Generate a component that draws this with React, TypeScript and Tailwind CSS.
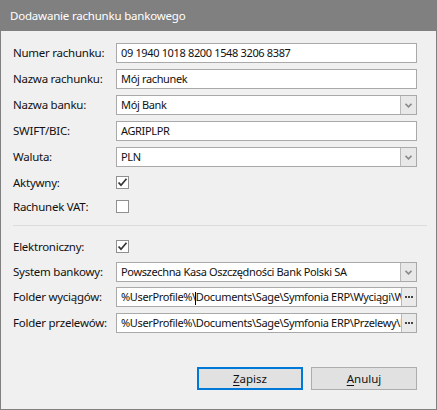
import { ReactNode } from 'react';

const font = { fontFamily: '"Noto Sans", "Open Sans", sans-serif' };

function Row({ label, children, className = '' }: { label: string; children: ReactNode; className?: string }) {
  return (
    <div className={`flex items-center ${className}`}>
      <div className="w-[103px] shrink-0 text-[11.5px] tracking-[-0.25px] leading-none text-[#111]">{label}</div>
      <div className="flex-1 min-w-0 h-full flex items-center">{children}</div>
    </div>
  );
}

function TextBox({ value, button, caret }: { value: string; button?: 'drop' | 'dots'; caret?: number }) {
  return (
    <div className="flex h-full w-full border border-[#a9a9a9] bg-white">
      <div className="flex-1 min-w-0 overflow-hidden whitespace-nowrap pl-[4px] text-[11px] tracking-[-0.35px] leading-[18px] text-[#111]">
        {caret !== undefined ? (
          <>
            {value.slice(0, caret)}
            <span className="inline-block w-px h-[13px] bg-black align-middle -mx-[0.5px]" />
            {value.slice(caret)}
          </>
        ) : (
          value
        )}
      </div>
      {button === 'drop' && (
        <div className="w-[16px] shrink-0 border-l border-[#b9b9b9] bg-[#e8e8e8] flex items-center justify-center">
          <svg width="7" height="5" viewBox="0 0 7 5">
            <path d="M0.5 0.8 L3.5 3.8 L6.5 0.8" fill="none" stroke="#8a8a8a" strokeWidth="1.6" />
          </svg>
        </div>
      )}
      {button === 'dots' && (
        <div className="w-[15px] shrink-0 border-l border-[#b9b9b9] bg-[#eaeaea] flex items-center justify-center gap-[1px]">
          <span className="w-[2px] h-[2px] bg-[#444]" />
          <span className="w-[2px] h-[2px] bg-[#444]" />
          <span className="w-[2px] h-[2px] bg-[#444]" />
        </div>
      )}
    </div>
  );
}

function Check({ checked }: { checked?: boolean }) {
  return (
    <div className="w-[13px] h-[13px] border border-[#8f8f8f] bg-white flex items-center justify-center">
      {checked && (
        <svg width="11" height="11" viewBox="0 0 11 11">
          <path d="M1.5 5.5 L4 8.2 L9.5 1.8" fill="none" stroke="#333" strokeWidth="1.7" />
        </svg>
      )}
    </div>
  );
}

export default function App() {
  return (
    <div className="w-[437px] h-[410px] bg-[#f0f0f0] flex flex-col border-x border-b border-[#808080]" style={font}>
      <div className="h-[31px] -mx-px shrink-0 bg-[#808080] flex items-center pl-[10px] text-[11.5px] tracking-[-0.2px] text-white">
        Dodawanie rachunku bankowego
      </div>
      <div className="flex flex-col pl-[12px] pr-[19px] pt-[12px]">
        <Row label="Numer rachunku:" className="h-[20px]">
          <TextBox value="09 1940 1018 8200 1548 3206 8387" />
        </Row>
        <Row label="Nazwa rachunku:" className="h-[20px] mt-[6px]">
          <TextBox value="Mój rachunek" />
        </Row>
        <Row label="Nazwa banku:" className="h-[20px] mt-[6px]">
          <TextBox value="Mój Bank" button="drop" />
        </Row>
        <Row label="SWIFT/BIC:" className="h-[20px] mt-[6px]">
          <TextBox value="AGRIPLPR" />
        </Row>
        <Row label="Waluta:" className="h-[20px] mt-[6px]">
          <TextBox value="PLN" button="drop" />
        </Row>
        <Row label="Aktywny:" className="h-[13px] mt-[9px]">
          <Check checked />
        </Row>
        <Row label="Rachunek VAT:" className="h-[13px] mt-[11px]">
          <Check />
        </Row>
        <div className="mt-[12px] h-px bg-[#dcdcdc] -mr-[10px]" />
        <Row label="Elektroniczny:" className="h-[13px] mt-[14px]">
          <Check checked />
        </Row>
        <Row label="System bankowy:" className="h-[20px] mt-[9px]">
          <TextBox value="Powszechna Kasa Oszczędności Bank Polski SA" button="drop" />
        </Row>
        <Row label="Folder wyciągów:" className="h-[20px] mt-[5px]">
          <TextBox value="%UserProfile%\Documents\Sage\Symfonia ERP\Wyciągi\Wyciągi" button="dots" caret={14} />
        </Row>
        <Row label="Folder przelewów:" className="h-[20px] mt-[6px]">
          <TextBox value="%UserProfile%\Documents\Sage\Symfonia ERP\Przelewy\Przelewy" button="dots" />
        </Row>
        <div className="mt-[34px] flex justify-end gap-[8px]">
          <button className="w-[106px] h-[23px] border-2 border-[#0078d7] bg-[#e1e1e1] text-[11.5px] text-[#111] leading-none">
            <span className="underline underline-offset-2">Z</span>apisz
          </button>
          <button className="w-[106px] h-[23px] border border-[#adadad] bg-[#e1e1e1] text-[11.5px] text-[#111] leading-none">
            <span className="underline underline-offset-2">A</span>nuluj
          </button>
        </div>
      </div>
    </div>
  );
}
